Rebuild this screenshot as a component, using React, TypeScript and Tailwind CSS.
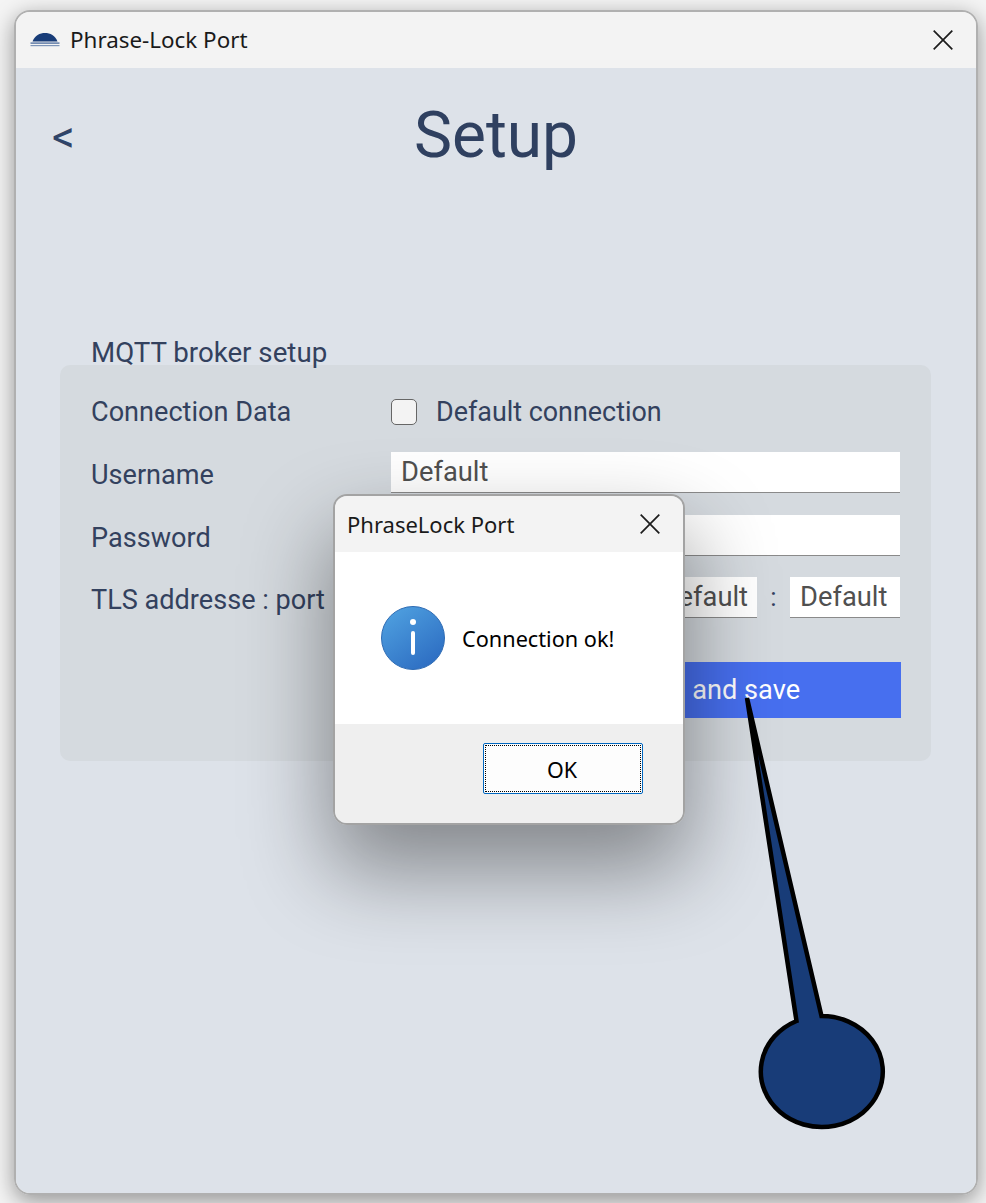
const rowLabel = "w-[300px] shrink-0 mt-[5px] text-[27.1px] leading-[32px] text-[#33415e]";
const fieldClass =
  "h-[41px] bg-white border-b border-[#8a8a8a] text-[27.3px] leading-[32px] text-[#505050] outline-none";

function CloseIcon({ size }: { size: number }) {
  return (
    <svg width={size} height={size} viewBox="0 0 20 20" className="shrink-0">
      <path d="M0.7 0.7 L19.3 19.3 M19.3 0.7 L0.7 19.3" stroke="#1c1c1c" strokeWidth="1.7" fill="none" />
    </svg>
  );
}

function Logo() {
  return (
    <svg width="30" height="16" viewBox="0 0 30 16" className="shrink-0">
      <path d="M2.5 9.5 C4.5 3.5 10 1 15 1 C20 1 25.5 3.5 27.5 9.5 Z" fill="#183c78" />
      <rect x="0.5" y="10.5" width="29" height="1.2" fill="#3d5f94" />
      <rect x="0.5" y="13" width="29" height="1.2" fill="#7e95b8" />
    </svg>
  );
}

function InfoIcon() {
  return (
    <svg width="64" height="64" viewBox="0 0 64 64" className="shrink-0">
      <defs>
        <linearGradient id="info" x1="0.15" y1="0.05" x2="0.8" y2="0.95">
          <stop offset="0" stopColor="#4e9fdf" />
          <stop offset="1" stopColor="#2d6dc2" />
        </linearGradient>
      </defs>
      <circle cx="32" cy="32" r="31.5" fill="url(#info)" stroke="#2f6cb4" strokeWidth="1" />
      <circle cx="32" cy="16" r="3" fill="#ffffff" />
      <rect x="30" y="25" width="4" height="24" rx="2" fill="#ffffff" />
    </svg>
  );
}

function Dialog() {
  return (
    <div className="absolute left-[333px] top-[494px] w-[352px] h-[331px] flex flex-col overflow-hidden rounded-[14px] border-2 border-[#a3a3a3] shadow-[0_42px_85px_4px_rgba(0,0,0,0.4)] font-['Noto_Sans',sans-serif]">
      <div className="h-[56px] shrink-0 flex items-center justify-between bg-[#f3f3f3] pl-3 pr-[23px]">
        <span className="text-[22px] text-[#1a1a1a]">PhraseLock Port</span>
        <CloseIcon size={20} />
      </div>
      <div className="h-[172px] shrink-0 flex items-center gap-[17px] bg-white pl-[46px]">
        <InfoIcon />
        <span className="mt-[2px] text-[21.7px] text-black">Connection ok!</span>
      </div>
      <div className="flex-1 bg-[#efefef] pl-[148px] pt-[19px]">
        <button className="w-[160px] h-[51px] rounded-[2px] border border-[#0067c0] bg-[#fdfdfd] p-px text-[21.5px] text-black">
          <span className="flex h-full w-full items-center justify-center border border-dotted border-black pt-[4px] pr-[2px]">OK</span>
        </button>
      </div>
    </div>
  );
}

function Callout() {
  return (
    <svg width="986" height="1203" viewBox="0 0 986 1203" className="absolute left-0 top-0 pointer-events-none">
      <path
        d="M747 698 L821.5 1016 A61 55.5 0 1 1 796.5 1021 Z"
        fill="#183c78"
        stroke="#000000"
        strokeWidth="4.5"
        strokeMiterlimit="8"
      />
    </svg>
  );
}

export default function App() {
  return (
    <div className="relative w-[986px] h-[1203px] overflow-hidden bg-[#f4f4f4] pt-[10px] pl-[14px] font-['Roboto',sans-serif]">
      <div className="w-[964px] h-[1185px] flex flex-col overflow-hidden rounded-[16px] border-2 border-[#b0b0b0] shadow-[0_6px_22px_rgba(0,0,0,0.4)]">
        <div className="h-[56px] shrink-0 flex items-center justify-between bg-[#f3f3f3] pl-[14px] pr-[23px]">
          <div className="flex items-center gap-[10px]">
            <Logo />
            <span className="font-['Noto_Sans',sans-serif] text-[22.4px] text-[#1a1a1a]">Phrase-Lock Port</span>
          </div>
          <CloseIcon size={20} />
        </div>

        <div className="flex-1 bg-[#dde2e9] px-[44px]">
          <div className="relative h-[135px] flex items-center justify-center">
            <span className="absolute left-[-8px] top-[47px] text-[45px] leading-[44px] text-[#2f4468]">&lt;</span>
            <h1 className="text-[64px] leading-[75px] text-[#2f4060]">Setup</h1>
          </div>

          <div className="pl-[31px] pt-[133px] text-[27.7px] leading-[34px] text-[#33415e]">MQTT broker setup</div>

          <div className="mt-[-5px] w-[871px] h-[396px] rounded-[10px] bg-[#d5dadf] pl-[31px] pr-[31px] pt-[30px]">
            <div className="flex items-center h-[33px]">
              <span className="w-[300px] shrink-0 text-[27.1px] leading-[32px] text-[#33415e]">Connection Data</span>
              <span className="w-[26px] h-[26px] shrink-0 rounded-[5px] border border-[#666666] bg-[#f3f3f3]" />
              <span className="ml-[19px] text-[26.9px] leading-[32px] text-[#33415e]">Default connection</span>
            </div>

            <div className="mt-[24px] flex items-center">
              <span className={rowLabel}>Username</span>
              <input readOnly value="Default" className={`${fieldClass} flex-1 min-w-0 px-[10px]`} />
            </div>

            <div className="mt-[22px] flex items-center">
              <span className={rowLabel}>Password</span>
              <input readOnly className={`${fieldClass} flex-1 min-w-0 px-[10px]`} />
            </div>

            <div className="mt-[21px] flex items-center">
              <span className={rowLabel}>TLS addresse : port</span>
              <input readOnly value="Default" className={`${fieldClass} flex-1 min-w-0 pr-[9px] text-right`} />
              <span className="w-[33px] text-center text-[26px] text-[#33415e]">:</span>
              <input readOnly value="Default" className={`${fieldClass} w-[110px] px-[10px]`} />
            </div>

            <div className="mt-[44px] ml-[300px]">
              <button className="w-[510px] h-[56px] bg-[#476fef] text-[27.2px] text-white">Test connection and save</button>
            </div>
          </div>
        </div>
      </div>

      <Dialog />
      <Callout />
    </div>
  );
}
